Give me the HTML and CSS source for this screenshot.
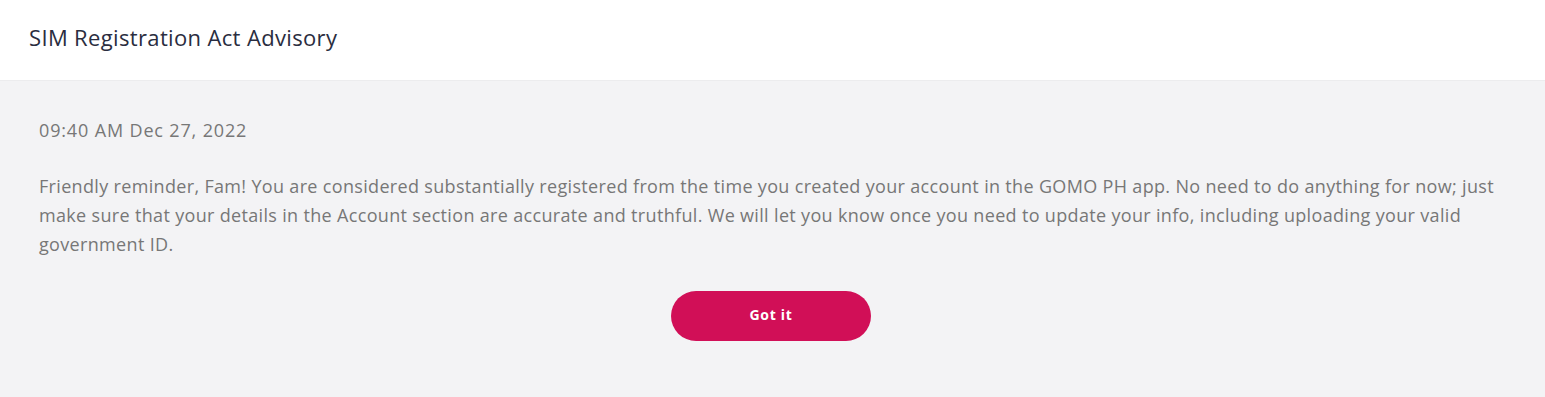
FILE: index.html
```html
<!DOCTYPE html>
<html lang="en">
<head>
<meta charset="utf-8">
<title>SIM Registration Act Advisory</title>
<link rel="stylesheet" href="styles.css">
</head>
<body>
<header class="header">
  <h1 class="title">SIM Registration Act Advisory</h1>
</header>
<main class="content">
  <p class="date">09:40 AM Dec 27, 2022</p>
  <p class="message">Friendly reminder, Fam! You are considered substantially registered from the time you created your account in the GOMO PH app. No need to do anything for now; just make sure that your details in the Account section are accurate and truthful. We will let you know once you need to update your info, including uploading your valid government ID.</p>
  <div class="actions">
    <button class="btn" type="button">Got it</button>
  </div>
</main>
</body>
</html>
```
FILE: styles.css
```css
* { box-sizing: border-box; }
html, body { margin: 0; padding: 0; }
body {
  font-family: "Open Sans", "Noto Sans", sans-serif;
  background: #f3f3f5;
  height: 397px;
  overflow: hidden;
}
.header {
  background: #ffffff;
  height: 81px;
  border-bottom: 1px solid #ececee;
  display: flex;
  align-items: center;
  padding: 0 0 6px 29px;
}
.title {
  margin: 0;
  font-size: 22px;
  font-weight: 400;
  color: #2a2d40;
  letter-spacing: 0.35px;
}
.content {
  padding: 36px 39px 0 39px;
}
.date {
  margin: 0;
  font-size: 18px;
  color: #777777;
  line-height: 26px;
  letter-spacing: 0.85px;
}
.message {
  margin: 29px 0 0 0;
  font-size: 18px;
  line-height: 29px;
  color: #777777;
  letter-spacing: 0.33px;
}
.actions {
  display: flex;
  justify-content: center;
  margin-top: 32px;
}
.btn {
  width: 200px;
  height: 50px;
  border: none;
  border-radius: 25px;
  background: #d10f57;
  color: #ffffff;
  font-family: "Open Sans", sans-serif;
  font-weight: 700;
  font-size: 14px;
  letter-spacing: 0.7px;
  padding: 0 0 3px 0;
  cursor: pointer;
  margin-right: 3px;
}
```
